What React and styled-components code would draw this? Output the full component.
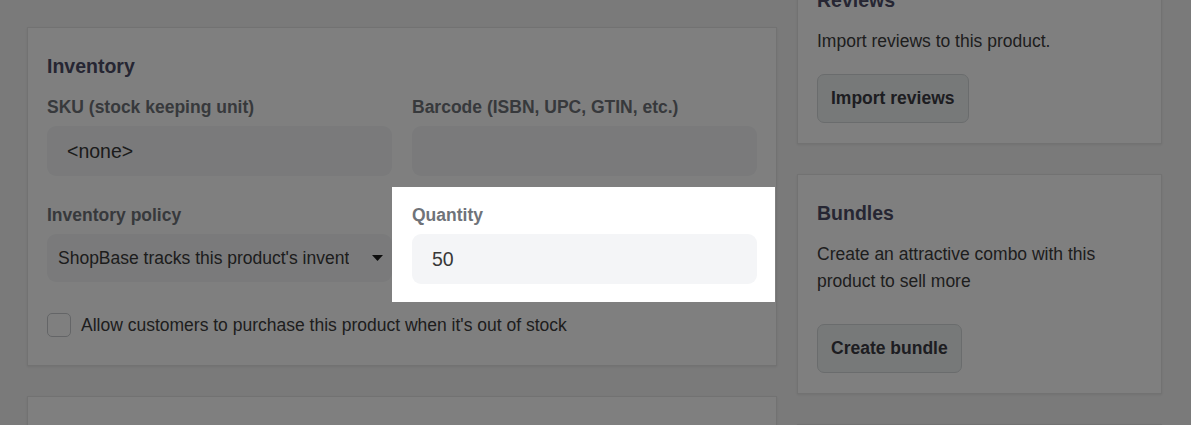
import React from "react";
import styled, { createGlobalStyle } from "styled-components";

const GlobalStyle = createGlobalStyle`
  html, body {
    margin: 0;
    overflow: hidden;
    background: #f4f4f4;
    font-family: "Liberation Sans", Arial, sans-serif;
  }
  * { box-sizing: border-box; }
`;

const App = () => {
  return (
    <>
      <GlobalStyle />
      <Page>
        <LeftColumn>
          <Card $bottom="27px">
            <CardTitle>Inventory</CardTitle>
            <FieldGrid>
              <Field>
                <Label>SKU (stock keeping unit)</Label>
                <Input>&lt;none&gt;</Input>
              </Field>
              <Field>
                <Label>Barcode (ISBN, UPC, GTIN, etc.)</Label>
                <Input />
              </Field>
              <Field>
                <Label>Inventory policy</Label>
                <Select>
                  <SelectText>ShopBase tracks this product's inventory</SelectText>
                  <svg width="11" height="6" viewBox="0 0 11 6">
                    <polygon points="0,0 11,0 5.5,6" fill="#1c1c1c" />
                  </svg>
                </Select>
              </Field>
              <Spotlight>
                <Label>Quantity</Label>
                <Input>50</Input>
              </Spotlight>
            </FieldGrid>
            <CheckRow>
              <Checkbox />
              <span>Allow customers to purchase this product when it's out of stock</span>
            </CheckRow>
          </Card>
          <Card $bottom="27px" $height="120px" />
        </LeftColumn>

        <RightColumn>
          <Card $bottom="20px">
            <CardTitle>Reviews</CardTitle>
            <Text>Import reviews to this product.</Text>
            <Button $top="19px">Import reviews</Button>
          </Card>
          <Card $bottom="20px">
            <CardTitle>Bundles</CardTitle>
            <Text>Create an attractive combo with this product to sell more</Text>
            <Button $top="29px">Create bundle</Button>
          </Card>
          <Card $bottom="20px" $height="120px" />
        </RightColumn>
      </Page>
    </>
  );
};

const Page = styled.div`
  display: grid;
  grid-template-columns: 750px 365px;
  column-gap: 20px;
  align-items: start;
  padding: 0 27px;
  margin-top: -39px;
`;

const LeftColumn = styled.div`
  display: flex;
  flex-direction: column;
  gap: 30px;
  padding-top: 66px;
`;

const RightColumn = styled.div`
  display: flex;
  flex-direction: column;
  gap: 30px;
`;

const Card = styled.section`
  display: flex;
  flex-direction: column;
  align-items: flex-start;
  min-height: ${props => props.$height || "auto"};
  padding: 24px 19px ${props => props.$bottom};
  background: #ffffff;
  border: 1px solid #e4e4e4;
  box-shadow: 0 1px 2px rgba(0, 0, 0, 0.07);
`;

const CardTitle = styled.h2`
  margin: 0 0 14px;
  font-size: 19.5px;
  font-weight: 700;
  line-height: 28px;
  color: #4c4c66;
`;

const FieldGrid = styled.div`
  display: grid;
  grid-template-columns: minmax(0, 1fr) minmax(0, 1fr);
  column-gap: 20px;
  row-gap: 26px;
  width: 100%;
`;

const Field = styled.div`
  display: flex;
  flex-direction: column;
  gap: 6px;
  min-width: 0;
`;

const Spotlight = styled(Field)`
  position: relative;
  z-index: 10;
  margin: -15px -18px -18px -20px;
  padding: 15px 18px 18px 20px;
  background: #ffffff;
  box-shadow: 0 0 0 3000px rgba(0, 0, 0, 0.5);
`;

const Label = styled.div`
  font-size: 17.5px;
  font-weight: 700;
  line-height: 26px;
  color: #6f7379;
`;

const Input = styled.div`
  display: flex;
  align-items: center;
  height: 50px;
  padding: 0 20px;
  font-size: 19.5px;
  color: #383838;
  background: #f4f5f7;
  border-radius: 9px;
`;

const Select = styled.div`
  display: flex;
  align-items: center;
  gap: 23px;
  height: 48px;
  padding: 0 9px 0 11px;
  font-size: 17.5px;
  color: #3a3a3a;
  background: #f4f5f7;
  border-radius: 9px;
`;

const SelectText = styled.span`
  flex: 1;
  min-width: 0;
  overflow: hidden;
  white-space: nowrap;
`;

const CheckRow = styled.label`
  display: flex;
  align-items: center;
  gap: 10px;
  margin-top: 28px;
  font-size: 17.5px;
  line-height: 26px;
  color: #3c3c3c;
`;

const Checkbox = styled.span`
  width: 24px;
  height: 24px;
  background: #ffffff;
  border: 1px solid #c8cbce;
  border-radius: 5px;
`;

const Text = styled.p`
  margin: 0;
  font-size: 17.5px;
  line-height: 27px;
  color: #3d3d3d;
`;

const Button = styled.button`
  height: 49px;
  margin-top: ${props => props.$top};
  padding: 0 13px;
  font-family: inherit;
  font-size: 17.5px;
  font-weight: 700;
  color: #3a3a42;
  background: #eef2f2;
  border: 1px solid #d5d9db;
  border-radius: 7px;
`;

export default App;
